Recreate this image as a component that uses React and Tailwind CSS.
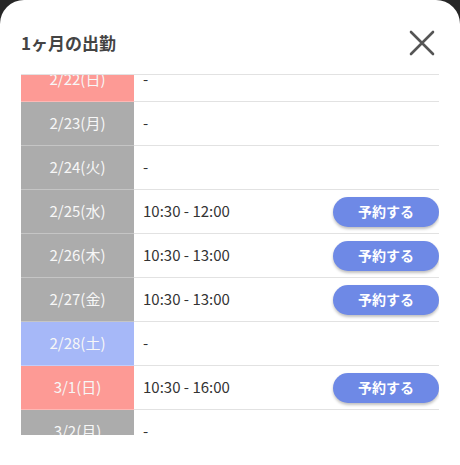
import React from "react";

const rows = [
  { d: "2/22(日)", c: "bg-[#fd9a95]", t: "-" },
  { d: "2/23(月)", c: "bg-[#acacac]", t: "-" },
  { d: "2/24(火)", c: "bg-[#acacac]", t: "-" },
  { d: "2/25(水)", c: "bg-[#acacac]", t: "10:30 - 12:00", b: true },
  { d: "2/26(木)", c: "bg-[#acacac]", t: "10:30 - 13:00", b: true },
  { d: "2/27(金)", c: "bg-[#acacac]", t: "10:30 - 13:00", b: true },
  { d: "2/28(土)", c: "bg-[#a6b8f8]", t: "-" },
  { d: "3/1(日)", c: "bg-[#fd9a95]", t: "10:30 - 16:00", b: true },
  { d: "3/2(月)", c: "bg-[#acacac]", t: "-" },
];

export default function App() {
  return (
    <div
      className="w-[460px] h-[465px] bg-[#262626] overflow-hidden"
      style={{ fontFamily: '"Noto Sans CJK JP", "Noto Sans", sans-serif' }}
    >
      <div className="w-full h-full bg-white rounded-t-[24px] flex flex-col px-[21px]">
        <div className="h-[74px] flex items-center justify-between pt-[12px]">
          <div className="text-[17px] font-bold text-[#444]">1ヶ月の出勤</div>
          <svg width="26" height="26" viewBox="0 0 26 26" className="mr-[4px]">
            <path d="M2 2 L24 24 M24 2 L2 24" stroke="#555" strokeWidth="2.6" strokeLinecap="round" />
          </svg>
        </div>
        <div className="h-[361px] overflow-hidden border-t border-[#e2e2e2]">
          <div className="-mt-[17px]">
            {rows.map((r, i) => (
              <div key={i} className="flex h-[44px]">
                <div
                  className={`w-[113px] shrink-0 flex items-center justify-center text-[15px] text-[#f7f7f7] border-b border-white/30 ${r.c}`}
                >
                  {r.d}
                </div>
                <div className="flex-1 flex items-center justify-between pl-[9px] border-b border-[#e2e2e2]">
                  <span className="text-[15px] text-[#333]">{r.t}</span>
                  {r.b && (
                    <span className="w-[106px] h-[30px] rounded-full bg-[#6e89e6] text-white text-[14px] font-bold flex items-center justify-center shadow-[0_2px_3px_rgba(0,0,0,0.25)]">
                      予約する
                    </span>
                  )}
                </div>
              </div>
            ))}
          </div>
        </div>
      </div>
    </div>
  );
}
